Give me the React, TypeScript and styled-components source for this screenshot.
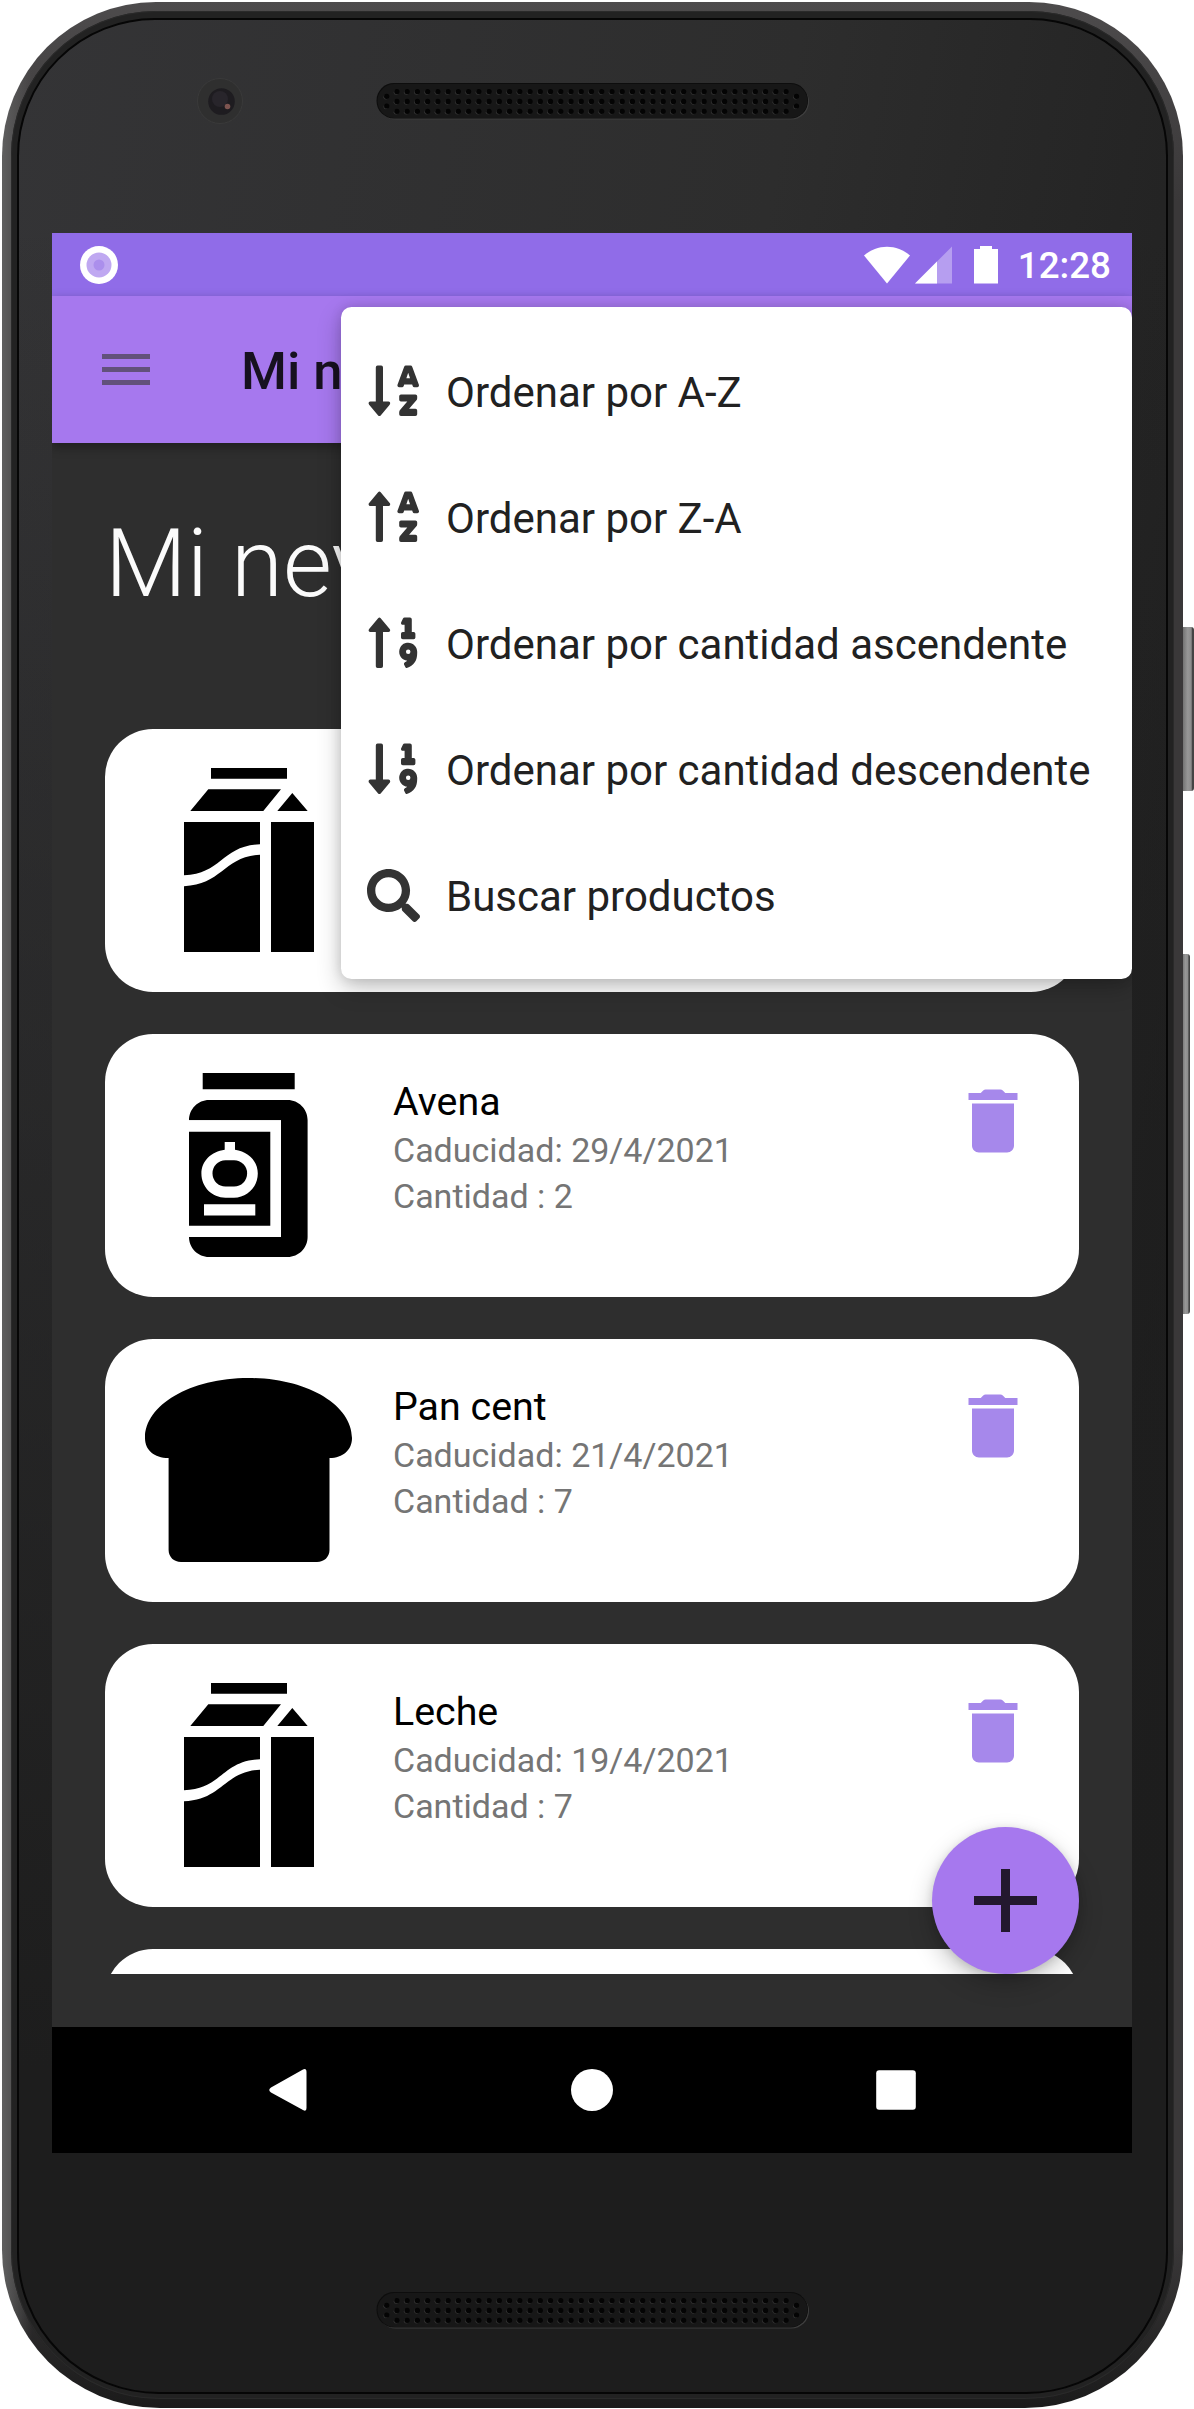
import React from 'react';
import styled, { createGlobalStyle } from 'styled-components';
import {
  FaSearch,
  FaSortAlphaDown,
  FaSortAlphaUp,
  FaSortNumericDown,
  FaSortNumericUp,
} from 'react-icons/fa';

const GlobalStyle = createGlobalStyle`
  * { box-sizing: border-box; }
  body {
    margin: 0;
    background: #fff;
    font-family: Roboto, "Liberation Sans", sans-serif;
  }
`;

const Stage = styled.div`
  position: relative;
  width: 1194px;
  height: 2409px;
  padding: 1.5px 11px 1px 1.5px;
  overflow: hidden;
`;

const SideButton = styled.div<{ $top: number; $height: number; $width: number }>`
  position: absolute;
  left: 1180px;
  top: ${(p) => p.$top}px;
  width: ${(p) => p.$width}px;
  height: ${(p) => p.$height}px;
  border-radius: 0 3px 3px 0;
  background: linear-gradient(90deg, #777 0 25%, #979797 55%, #8c8c8c 80%, #444 88%);
`;

const Shell = styled.div`
  position: relative;
  height: 100%;
  padding: 9.5px;
  border-radius: 154px 154px 158px 158px;
  background:
    linear-gradient(90deg, #5f5f5f 0, rgba(95, 95, 95, 0) 30px) no-repeat,
    linear-gradient(180deg, #4d4b4c 0, #3a3839 200px, #3a3839 2240px, #1b1b1b 2404px);
`;

const Bezel = styled.div`
  height: 100%;
  padding: 7px 6px 5px;
  border-radius: 145px 145px 149px 149px;
  background: #222;
  box-shadow: inset 0 0 0 1px #2a2a2a;
`;

const Glass = styled.div`
  display: flex;
  flex-direction: column;
  align-items: flex-start;
  height: 100%;
  padding-left: 33px;
  border-radius: 138px 138px 142px 142px;
  border: 2px solid #060606;
  background:
    linear-gradient(180deg, rgba(29, 29, 29, 0) 200px, #1d1d1d 2050px),
    linear-gradient(100deg, #343436 0, #2d2d2d 50%, #1e1e1e 92%);
`;

const TopBezel = styled.div`
  display: flex;
  align-items: flex-start;
  width: 1080px;
  height: 213px;
  padding: 57px 0 0 144px;
`;

const BottomBezel = styled.div`
  width: 1080px;
  padding: 138.5px 0 0 324px;
`;

const Camera = styled.svg`
  width: 48px;
  height: 48px;
  margin-right: 132px;
`;

const Grille = styled.svg<{ $top?: number }>`
  display: block;
  width: 434px;
  height: 38px;
  margin-top: ${(p) => p.$top ?? 0}px;
`;

const Screen = styled.div`
  position: relative;
  display: flex;
  flex-direction: column;
  flex: none;
  width: 1080px;
  height: 1920px;
  overflow: hidden;
  background: #2e2e2e;
`;

const StatusBar = styled.div`
  display: flex;
  align-items: center;
  justify-content: space-between;
  flex: none;
  height: 63px;
  padding: 0 21px 0 28px;
  background: #906ce8;
`;

const StatusGroup = styled.div`
  display: flex;
  align-items: center;
`;

const StatusIcon = styled.svg<{ $w: number; $gap?: number }>`
  display: block;
  width: ${(p) => p.$w}px;
  height: 38px;
  margin-right: ${(p) => p.$gap ?? 0}px;
`;

const Clock = styled.span`
  padding-top: 3px;
  color: #fff;
  font-size: 36.75px;
  font-weight: 500;
  line-height: 44px;
`;

const AppBar = styled.header`
  position: relative;
  display: flex;
  align-items: center;
  flex: none;
  height: 147px;
  padding-left: 50px;
  background: #a678ee;
  box-shadow: 0 4px 10px rgba(0, 0, 0, 0.35);
`;

const MenuButton = styled.button`
  display: flex;
  flex-direction: column;
  gap: 8px;
  width: 47.5px;
  padding: 0;
  border: 0;
  background: none;
`;

const MenuLine = styled.span`
  height: 5.2px;
  background: #62517b;
`;

const AppTitle = styled.h1`
  margin: 0 0 0 91.5px;
  padding-top: 3px;
  color: #17111f;
  font-size: 52.5px;
  font-weight: 500;
  line-height: 62px;
`;

const Content = styled.main`
  flex: 1;
  padding: 58px 53px 53px;
`;

const Heading = styled.h2`
  margin: 0;
  color: #fbfbfb;
  font-size: 94.5px;
  font-weight: 300;
  line-height: 126px;
`;

const List = styled.div`
  display: flex;
  flex-direction: column;
  gap: 42px;
  height: 1245px;
  margin-top: 102px;
  overflow: hidden;
`;

const Card = styled.article`
  display: flex;
  flex: none;
  height: 263px;
  border-radius: 48px;
  background: #fff;
`;

const Picture = styled.div`
  display: flex;
  justify-content: center;
  width: 287px;
  margin-right: 1px;
  padding-top: 39px;
`;

const Details = styled.div`
  flex: 1;
  padding-top: 45px;
`;

const ProductName = styled.div`
  margin-bottom: 1.5px;
  color: #000;
  font-size: 39.375px;
  line-height: 46px;
`;

const ProductMeta = styled.div`
  color: #757575;
  font-size: 34px;
  line-height: 46px;
`;

const DeleteIcon = styled.svg`
  width: 84px;
  height: 84px;
  margin: 44.5px 44.5px 0 0;
  fill: #a688eb;
`;

const Popup = styled.div`
  position: absolute;
  left: 289px;
  top: 74px;
  width: 791px;
  height: 672px;
  padding: 21px 0;
  border-radius: 10.5px;
  background: #fff;
  box-shadow: 0 9px 24px rgba(0, 0, 0, 0.24), 0 0 12px rgba(0, 0, 0, 0.12);
`;

const PopupItem = styled.div`
  display: flex;
  align-items: center;
  height: 126px;
  color: #212121;
  font-size: 42px;
  line-height: 50px;
  white-space: nowrap;
`;

const PopupIcon = styled.span<{ $size: number }>`
  display: flex;
  justify-content: center;
  width: 105px;
  color: #333;
  svg {
    display: block;
    width: auto;
    height: ${(p) => p.$size}px;
  }
`;

const PopupLabel = styled.span`
  padding-top: 3px;
`;

const Fab = styled.button`
  position: absolute;
  left: 880px;
  top: 1594px;
  display: flex;
  align-items: center;
  justify-content: center;
  width: 147px;
  height: 147px;
  padding: 0;
  border: 0;
  border-radius: 50%;
  background: #a678ee;
  box-shadow: 0 10px 24px rgba(0, 0, 0, 0.22), 0 2px 8px rgba(0, 0, 0, 0.12);
`;

const NavBar = styled.nav`
  display: grid;
  grid-template-columns: 474px 132px 474px;
  flex: none;
  align-items: center;
  justify-items: center;
  height: 126px;
  background: #000;
`;

const NavIcon = styled.svg<{ $shift?: number }>`
  width: 42px;
  height: 42px;
  fill: #fff;
  margin-left: ${(p) => p.$shift ?? 0}px;
`;

function SpeakerGrille({ top }: { top?: number }) {
  const holes: [number, number][] = [];
  for (let c = 0; c < 39; c++) {
    for (let r = 0; r < 3; r++) holes.push([20.9 + c * 10.24, 8.5 + r * 9.9]);
  }
  for (const x of [10.7, 420.5]) holes.push([x, 13.3], [x, 23]);
  return (
    <Grille $top={top} viewBox="0 0 434 38">
      <rect x="2" y="1.5" width="431" height="35" rx="17.5" fill="#3e3e3e" />
      <rect x="0.5" y="0" width="431.5" height="35.5" rx="17.5" fill="#0d0d0d" />
      <rect x="1.5" y="1" width="430" height="34" rx="17" fill="#171717" />
      {holes.map(([x, y]) => (
        <g key={`${x}-${y}`}>
          <circle cx={x - 0.9} cy={y + 0.9} r="2.4" fill="#333" />
          <circle cx={x} cy={y} r="2.6" fill="#040404" />
        </g>
      ))}
    </Grille>
  );
}

function MilkPicture() {
  return (
    <svg width="130" height="184" viewBox="0 0 130 184">
      <path d="M27 0H103V10.8H27ZM6.3 43L24.3 21.3H97L79.3 43ZM93.3 43L108.3 25L123.7 43Z" />
      <path d="M87 54H130V184H87ZM0 54H76V76.3C38 77.5 38 106 0 107.3Z" />
      <path d="M76 86.8C40 88.5 38 117 0 118.2V184H76Z" />
    </svg>
  );
}

function JarPicture() {
  return (
    <svg width="119" height="184" viewBox="0 0 119 184">
      <path d="M13.7 0H105.7V16.3H13.7Z" />
      <path d="M0 47.3C0 36 9 27 20 27H98.6C109.6 27 118.6 36 118.6 47V164C118.6 175 109.6 184 98.6 184H20C9 184 0 175 0 164H92V47.3Z" />
      <path d="M0 47.2H92V163.8H0Z" fill="#fff" />
      <path d="M0 58.7H81.3V152.7H0Z" />
      <path d="M35.7 69H46V76.8C59 78.5 68.8 88 68.8 100.5C68.8 114 58 124.7 45 124.7H36.5C23 124.7 12.4 114 12.4 100.5C12.4 88 22.5 78.5 35.7 76.8ZM15 131.2H66.3V142.5H15Z" fill="#fff" />
      <rect x="23.5" y="87.3" width="34.6" height="26.2" rx="13" />
    </svg>
  );
}

function BreadPicture() {
  return (
    <svg width="207" height="184" viewBox="0 0 207 184">
      <path d="M0 60C0 27 45 0 103.5 0S207 27 207 60C207 72 198 80 184.5 80V172C184.5 179 179 184 172 184H36C29 184 23.6 179 23.6 172V80C9 80 0 72 0 60Z" />
    </svg>
  );
}

type Product = {
  name: string;
  expires: string;
  amount: number;
  picture: React.ReactNode;
};

const products: Product[] = [
  { name: '', expires: '', amount: 0, picture: <MilkPicture /> },
  { name: 'Avena', expires: '29/4/2021', amount: 2, picture: <JarPicture /> },
  { name: 'Pan cent', expires: '21/4/2021', amount: 7, picture: <BreadPicture /> },
  { name: 'Leche', expires: '19/4/2021', amount: 7, picture: <MilkPicture /> },
];

const options = [
  { label: 'Ordenar por A-Z', icon: <FaSortAlphaDown />, size: 57.6 },
  { label: 'Ordenar por Z-A', icon: <FaSortAlphaUp />, size: 57.6 },
  { label: 'Ordenar por cantidad ascendente', icon: <FaSortNumericUp />, size: 57.6 },
  { label: 'Ordenar por cantidad descendente', icon: <FaSortNumericDown />, size: 57.6 },
  { label: 'Buscar productos', icon: <FaSearch />, size: 53 },
];

function ProductCard({ product }: { product: Product }) {
  return (
    <Card>
      <Picture>{product.picture}</Picture>
      <Details>
        {product.name && (
          <>
            <ProductName>{product.name}</ProductName>
            <ProductMeta>Caducidad: {product.expires}</ProductMeta>
            <ProductMeta>Cantidad : {product.amount}</ProductMeta>
          </>
        )}
      </Details>
      {product.name && (
        <DeleteIcon viewBox="0 0 24 24">
          <path d="M6 19c0 1.1.9 2 2 2h8c1.1 0 2-.9 2-2V7H6v12zM19 4h-3.5l-.7-.7a1 1 0 0 0-.7-.3H9.900a1 1 0 0 0-.7.3L8.500 4H5v2h14V4z" />
        </DeleteIcon>
      )}
    </Card>
  );
}

export default function App() {
  return (
    <>
      <GlobalStyle />
      <Stage>
        <SideButton $top={627} $height={164} $width={14} />
        <SideButton $top={954} $height={360} $width={10} />
        <Shell>
          <Bezel>
            <Glass>
              <TopBezel>
                <Camera viewBox="0 0 48 48">
                  <circle cx="24" cy="24" r="22.5" fill="#2f2f2f" stroke="#3a3a3a" />
                  <circle cx="25.500" cy="24.500" r="13.300" fill="#1e1c20" />
                  <circle cx="24" cy="22" r="8" fill="#28252b" />
                  <circle cx="31.500" cy="29.500" r="2.800" fill="#7d5450" />
                </Camera>
                <SpeakerGrille top={6} />
              </TopBezel>
              <Screen>
                <StatusBar>
                  <StatusIcon $w={38} viewBox="0 0 38 38">
                    <circle cx="19" cy="19" r="19" fill="#fff" />
                    <circle cx="19" cy="19" r="12.500" fill="#bfa8f1" />
                    <circle cx="19" cy="19" r="5.500" fill="#ab8fec" />
                  </StatusIcon>
                  <StatusGroup>
                    <StatusIcon $w={46} $gap={5} viewBox="0 0 46 38">
                      <path d="M0 9.500C13-2.300 33-2.300 46 9.500L23 37.500Z" fill="#fff" />
                    </StatusIcon>
                    <StatusIcon $w={37} $gap={22} viewBox="0 0 37 38">
                      <path d="M37 0.500V37.500H0Z" fill="#b69ef0" />
                      <path d="M22 15.500V37.500H0Z" fill="#fff" />
                    </StatusIcon>
                    <StatusIcon $w={24} $gap={20} viewBox="0 0 24 38">
                      <path d="M6 0H18V3H24V37.500H0V3H6Z" fill="#fff" />
                    </StatusIcon>
                    <Clock>12:28</Clock>
                  </StatusGroup>
                </StatusBar>
                <AppBar>
                  <MenuButton aria-label="Menú">
                    <MenuLine />
                    <MenuLine />
                    <MenuLine />
                  </MenuButton>
                  <AppTitle>Mi nevera</AppTitle>
                </AppBar>
                <Content>
                  <Heading>Mi nevera</Heading>
                  <List>
                    {products.map((product, i) => (
                      <ProductCard key={i} product={product} />
                    ))}
                    <Card />
                  </List>
                </Content>
                <NavBar>
                  <NavIcon $shift={-2} viewBox="0 0 42 42">
                    <path d="M36 0.500Q39.500-1 39.500 3V39Q39.500 43 36 41L4 23.500Q0.500 21 4 18.500Z" />
                  </NavIcon>
                  <NavIcon viewBox="0 0 42 42">
                    <circle cx="21" cy="21" r="21" />
                  </NavIcon>
                  <NavIcon $shift={2} viewBox="0 0 42 42">
                    <rect x="1.200" y="1.200" width="39.600" height="39.600" rx="3" />
                  </NavIcon>
                </NavBar>
                <Fab aria-label="Añadir">
                  <svg width="63" height="63" viewBox="0 0 63 63">
                    <path d="M27 0H36V27H63V36H36V63H27V36H0V27H27Z" fill="#23182f" />
                  </svg>
                </Fab>
                <Popup>
                  {options.map((o) => (
                    <PopupItem key={o.label}>
                      <PopupIcon $size={o.size}>{o.icon}</PopupIcon>
                      <PopupLabel>{o.label}</PopupLabel>
                    </PopupItem>
                  ))}
                </Popup>
              </Screen>
              <BottomBezel>
                <SpeakerGrille />
              </BottomBezel>
            </Glass>
          </Bezel>
        </Shell>
      </Stage>
    </>
  );
}
